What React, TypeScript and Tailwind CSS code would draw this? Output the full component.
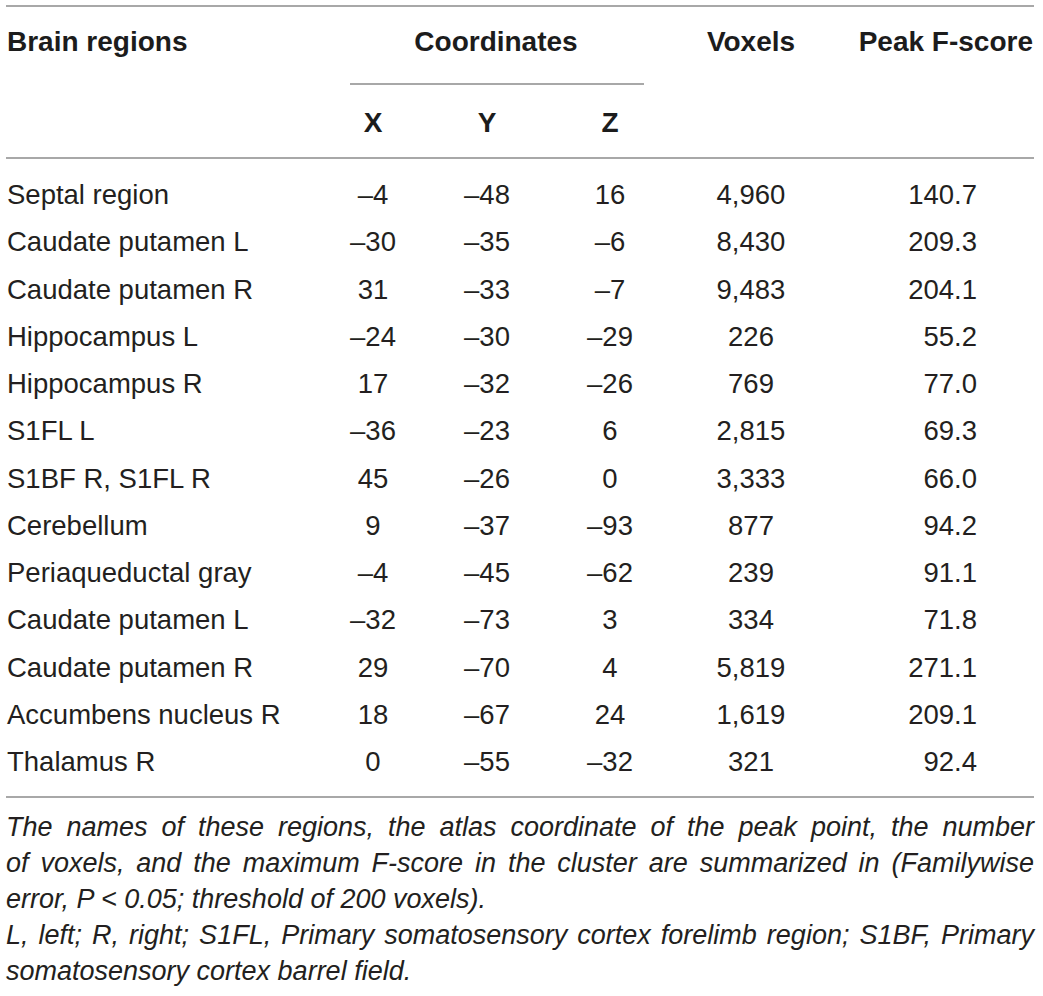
import React from "react";

type Row = { name: string; x: string; y: string; z: string; voxels: string; peak: string };

const rows: Row[] = [
  { name: "Septal region", x: "–4", y: "–48", z: "16", voxels: "4,960", peak: "140.7" },
  { name: "Caudate putamen L", x: "–30", y: "–35", z: "–6", voxels: "8,430", peak: "209.3" },
  { name: "Caudate putamen R", x: "31", y: "–33", z: "–7", voxels: "9,483", peak: "204.1" },
  { name: "Hippocampus L", x: "–24", y: "–30", z: "–29", voxels: "226", peak: "55.2" },
  { name: "Hippocampus R", x: "17", y: "–32", z: "–26", voxels: "769", peak: "77.0" },
  { name: "S1FL L", x: "–36", y: "–23", z: "6", voxels: "2,815", peak: "69.3" },
  { name: "S1BF R, S1FL R", x: "45", y: "–26", z: "0", voxels: "3,333", peak: "66.0" },
  { name: "Cerebellum", x: "9", y: "–37", z: "–93", voxels: "877", peak: "94.2" },
  { name: "Periaqueductal gray", x: "–4", y: "–45", z: "–62", voxels: "239", peak: "91.1" },
  { name: "Caudate putamen L", x: "–32", y: "–73", z: "3", voxels: "334", peak: "71.8" },
  { name: "Caudate putamen R", x: "29", y: "–70", z: "4", voxels: "5,819", peak: "271.1" },
  { name: "Accumbens nucleus R", x: "18", y: "–67", z: "24", voxels: "1,619", peak: "209.1" },
  { name: "Thalamus R", x: "0", y: "–55", z: "–32", voxels: "321", peak: "92.4" },
];

const cols = "grid grid-cols-[317px_100px_128px_118px_164px_201px]";

// footnote lines broken where the printed table breaks them
const justified = "text-justify [text-align-last:justify]";

export default function App() {
  return (
    <div className="min-h-screen bg-white text-[#231f20] font-['Liberation_Sans',Arial,sans-serif]">
      <div className="ml-[6px] w-[1028px] pt-[5px]">
        <div className="h-[2px] bg-[#a8a8a8]" />

        {/* header */}
        <div className={`${cols} grid-rows-[76px_2px_72px] text-[28px] font-bold leading-[32px] text-[#1c1c1c]`}>
          <div className="col-start-1 row-start-1 pt-[19px] pl-[1px]">Brain regions</div>
          <div className="col-start-2 col-span-3 row-start-1 pt-[19px] text-center">Coordinates</div>
          <div className="col-start-5 row-start-1 pt-[19px] text-center">Voxels</div>
          <div className="col-start-6 row-start-1 pt-[19px] text-right pr-[1px]">Peak F-score</div>
          <div className="col-start-2 col-span-3 row-start-2 ml-[27px] mr-[25px] bg-[#a8a8a8]" />
          <div className="col-start-2 row-start-3 pt-[22px] text-center">X</div>
          <div className="col-start-3 row-start-3 pt-[22px] text-center">Y</div>
          <div className="col-start-4 row-start-3 pt-[22px] text-center">Z</div>
        </div>

        <div className="h-[2px] bg-[#a8a8a8]" />

        {/* body */}
        <div className="pt-[12px] pb-[11px] text-[27.5px] leading-[47.25px]">
          {rows.map((r, i) => (
            <div key={i} className={cols}>
              <div className="pl-[1px] whitespace-nowrap">{r.name}</div>
              <div className="text-center">{r.x}</div>
              <div className="text-center">{r.y}</div>
              <div className="text-center">{r.z}</div>
              <div className="text-center">{r.voxels}</div>
              <div className="text-right pr-[57px]">{r.peak}</div>
            </div>
          ))}
        </div>

        <div className="h-[2px] bg-[#a8a8a8]" />

        {/* footnotes */}
        <div className="mt-[11px] text-[27px] leading-[36px] italic">
          <div className={justified}>
            The names of these regions, the atlas coordinate of the peak point, the number
          </div>
          <div className={justified}>
            of voxels, and the maximum F-score in the cluster are summarized in (Familywise
          </div>
          <div>error, P &lt; 0.05; threshold of 200 voxels).</div>
          <div className={justified}>
            L, left; R, right; S1FL, Primary somatosensory cortex forelimb region; S1BF, Primary
          </div>
          <div>somatosensory cortex barrel field.</div>
        </div>
      </div>
    </div>
  );
}
